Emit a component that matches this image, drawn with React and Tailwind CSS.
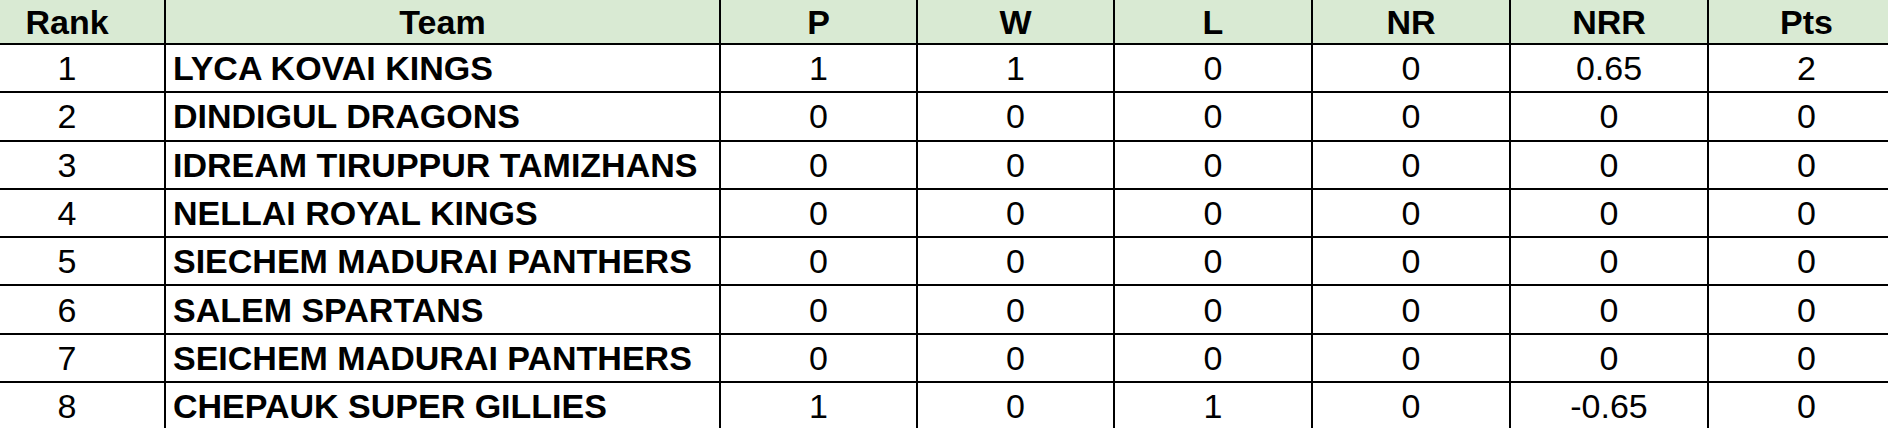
import React from 'react';

const headers = ['Rank', 'Team', 'P', 'W', 'L', 'NR', 'NRR', 'Pts'];

const rows = [
  [1, 'LYCA KOVAI KINGS', 1, 1, 0, 0, '0.65', 2],
  [2, 'DINDIGUL DRAGONS', 0, 0, 0, 0, 0, 0],
  [3, 'IDREAM TIRUPPUR TAMIZHANS', 0, 0, 0, 0, 0, 0],
  [4, 'NELLAI ROYAL KINGS', 0, 0, 0, 0, 0, 0],
  [5, 'SIECHEM MADURAI PANTHERS', 0, 0, 0, 0, 0, 0],
  [6, 'SALEM SPARTANS', 0, 0, 0, 0, 0, 0],
  [7, 'SEICHEM MADURAI PANTHERS', 0, 0, 0, 0, 0, 0],
  [8, 'CHEPAUK SUPER GILLIES', 1, 0, 1, 0, '-0.65', 0],
];

const cols = 'grid grid-cols-[164px_555px_197px_197px_198px_198px_198px_197px]';

const App = () => {
  return (
    <div className="w-[1888px] h-[428px] overflow-hidden bg-white text-black font-['Liberation_Sans',Arial,sans-serif]">
      <div className="w-[1904px]">
        {/* Header */}
        <div className={`${cols} h-[45px] bg-[#d9ead3] border-b-2 border-black`}>
          {headers.map((h, i) => (
            <div
              key={h}
              className={`flex items-center justify-center text-[34px] font-bold leading-none ${
                i > 0 ? 'border-l-2 border-black' : 'pr-[30px]'
              }`}
            >
              {h}
            </div>
          ))}
        </div>

        {/* Rows */}
        {rows.map((r) => (
          <div key={r[0]} className={`${cols} h-[48.3px] border-b-2 border-black`}>
            {r.map((cell, i) => (
              <div
                key={i}
                className={`flex items-center leading-none text-[34px] ${
                  i > 0 ? 'border-l-2 border-black' : 'pr-[30px]'
                } ${i === 1 ? 'justify-start pl-[7px] font-bold' : 'justify-center'}`}
              >
                {cell}
              </div>
            ))}
          </div>
        ))}
      </div>
    </div>
  );
};

export default App;
